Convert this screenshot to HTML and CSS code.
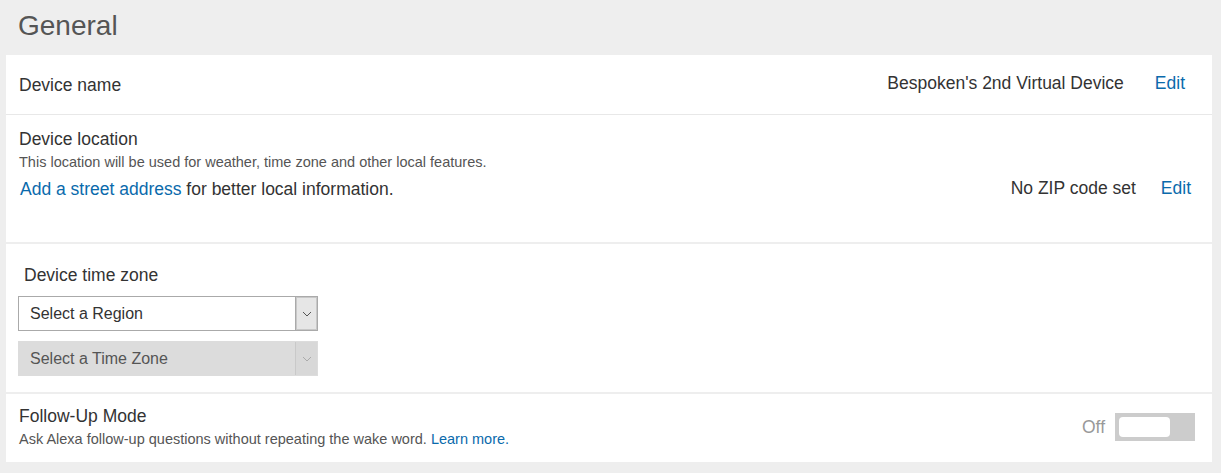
FILE: index.html
```html
<!DOCTYPE html>
<html lang="en">
<head>
<meta charset="utf-8">
<title>General</title>
<link rel="stylesheet" href="styles.css">
</head>
<body>
<h1 class="page-title">General</h1>
<div class="card">
  <div class="row row-name">
    <div class="label">Device name</div>
    <div class="value-group gap-name">
      <span class="value">Bespoken's 2nd Virtual Device</span>
      <a class="link edit" href="#">Edit</a>
    </div>
  </div>
  <div class="row row-location">
    <div class="loc-main">
      <div class="label">Device location</div>
      <div class="sub">This location will be used for weather, time zone and other local features.</div>
      <div class="street"><a class="link" href="#">Add a street address</a> for better local information.</div>
    </div>
    <div class="value-group gap-zip">
      <span class="value">No ZIP code set</span>
      <a class="link edit" href="#">Edit</a>
    </div>
  </div>
  <div class="row row-tz">
    <div class="label tz-label">Device time zone</div>
    <div class="select">
      <span class="select-text">Select a Region</span>
      <span class="select-arrow"><svg width="10" height="6" viewBox="0 0 10 6"><path d="M1 1 L5 5 L9 1" fill="none" stroke="#555" stroke-width="1"/></svg></span>
    </div>
    <div class="select select-disabled">
      <span class="select-text">Select a Time Zone</span>
      <span class="select-arrow"><svg width="10" height="6" viewBox="0 0 10 6"><path d="M1 1 L5 5 L9 1" fill="none" stroke="#aaa" stroke-width="1"/></svg></span>
    </div>
  </div>
  <div class="row row-follow">
    <div class="follow-main">
      <div class="label">Follow-Up Mode</div>
      <div class="sub">Ask Alexa follow-up questions without repeating the wake word. <a class="link" href="#">Learn more.</a></div>
    </div>
    <div class="toggle-group">
      <span class="toggle-label">Off</span>
      <span class="toggle"><span class="knob"></span></span>
    </div>
  </div>
</div>
</body>
</html>
```
FILE: styles.css
```css
* { box-sizing: border-box; }
html, body { margin: 0; padding: 0; }
body {
  background: #eeeeee;
  font-family: "Liberation Sans", Arial, sans-serif;
  color: #333;
  width: 1221px;
  height: 473px;
  overflow: hidden;
}
.page-title {
  margin: 0;
  height: 55px;
  padding: 9px 0 0 18px;
  font-size: 28px;
  font-weight: normal;
  line-height: 34px;
  color: #555;
}
.card {
  margin: 0 9px 0 6px;
  display: flex;
  flex-direction: column;
  gap: 2px;
}
.row {
  background: #fff;
}
.label {
  font-size: 17.5px;
  line-height: 20px;
  color: #333;
}
.sub {
  font-size: 14.5px;
  line-height: 17px;
  color: #555;
}
.link { color: #0a6aac; text-decoration: none; }
.value { font-size: 17.5px; color: #333; }
.edit { font-size: 17.5px; }
.value-group { display: flex; align-items: center; }
.row-name {
  height: 60px;
  border-bottom: 1px solid #e8e8e8;
  display: flex;
  align-items: center;
  justify-content: space-between;
  padding: 0 27px 0 13px;
  margin-bottom: -2px;
}
.row-name .value-group { margin-top: -2px; }
.gap-name { gap: 31px; }
.row-location {
  height: 127px;
  display: flex;
  justify-content: space-between;
  align-items: flex-start;
  padding: 14px 21px 0 13px;
}
.row-location .sub { margin-top: 5px; }
.street {
  margin-top: 8px;
  margin-left: 1px;
  font-size: 17.5px;
  line-height: 20px;
  color: #333;
}
.gap-zip { gap: 25px; margin-top: 49px; }
.row-tz {
  height: 148px;
  padding: 21px 0 0 12px;
  display: flex;
  flex-direction: column;
}
.tz-label { margin-left: 6px; margin-bottom: 11px; }
.select {
  width: 300px;
  height: 35px;
  border: 1px solid #aaa;
  display: flex;
  align-items: center;
  justify-content: space-between;
  background: #fff;
  margin-bottom: 10px;
}
.select-text {
  font-size: 16px;
  color: #333;
  padding-left: 11px;
}
.select-arrow {
  width: 22px;
  height: 33px;
  border-left: 1px solid #aaa;
  background: #e6e6e6;
  box-shadow: inset 0 0 0 1px #c8c8c8;
  display: flex;
  align-items: center;
  justify-content: center;
}
.select-disabled {
  border-color: #dcdcdc;
  background: #dcdcdc;
}
.select-disabled .select-text { color: #555; }
.select-disabled .select-arrow {
  border-left: 1px solid #c9c9c9;
  background: #d8d8d8;
  box-shadow: none;
}
.row-follow {
  height: 68px;
  display: flex;
  justify-content: space-between;
  align-items: flex-start;
  padding: 12px 17px 0 13px;
}
.row-follow .sub { margin-top: 5px; }
.toggle-group {
  display: flex;
  align-items: center;
  gap: 10px;
  margin-top: 7px;
}
.toggle-label { font-size: 17.5px; color: #999; }
.toggle {
  width: 80px;
  height: 28px;
  background: #cccccc;
  display: flex;
  align-items: center;
  padding-left: 4px;
}
.knob {
  width: 51px;
  height: 20px;
  background: #fff;
  border-radius: 4px;
}
```
